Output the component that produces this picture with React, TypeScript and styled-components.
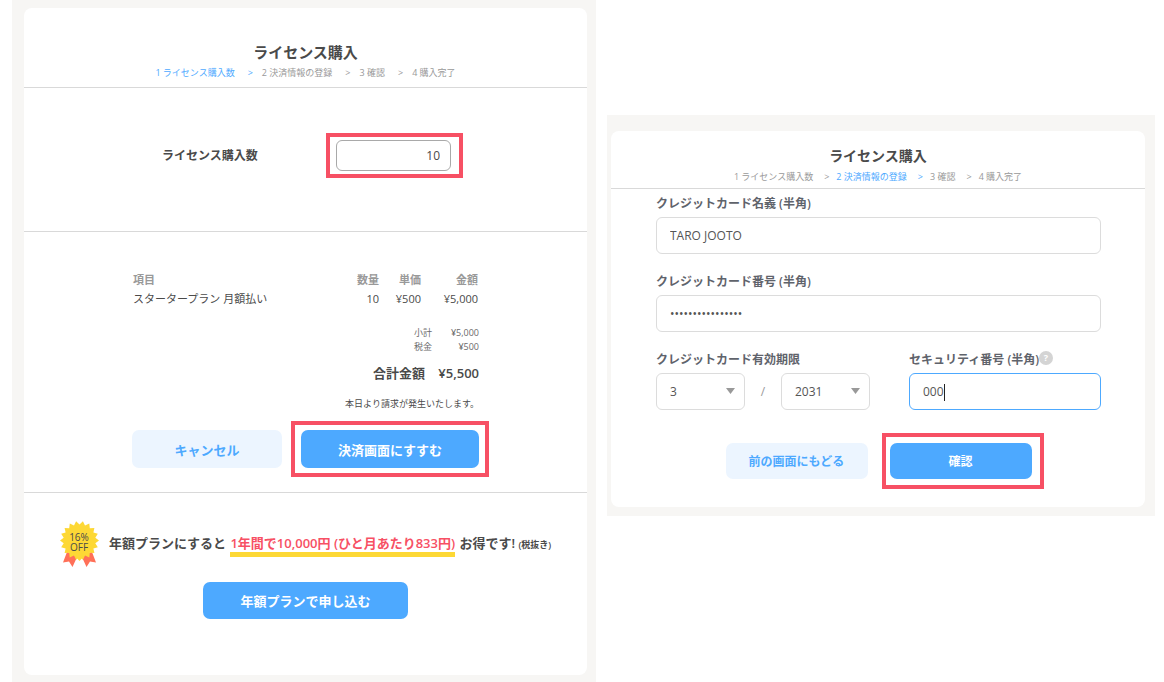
import React from "react";
import styled, { createGlobalStyle, css } from "styled-components";

const color = {
  primary: "#4da9ff",
  primarySoft: "#ecf5ff",
  highlight: "#f75064",
  line: "#d9d9d9",
  text: "#4a4a4a",
  label: "#5f636b",
  muted: "#999999",
  backdrop: "#f7f6f4",
};

const GlobalStyle = createGlobalStyle`
  *, *::before, *::after { box-sizing: border-box; }
  body {
    margin: 0;
    background: #fff;
    color: ${color.text};
    font-family: "Open Sans", "Noto Sans CJK JP", sans-serif;
    font-size: 12px;
  }
  button, input, select { font: inherit; color: inherit; margin: 0; }
  h1, p, dl, dd, ol { margin: 0; padding: 0; }
`;

const Page = styled.main`
  display: grid;
  grid-template-columns: minmax(0, 584fr) minmax(0, 548fr);
  align-items: start;
  gap: 11px;
  padding: 0 9px 0 12px;
`;

const CountPanel = styled.div`
  padding: 8px 9px 7px 12px;
  background: ${color.backdrop};
`;

const PaymentPanel = styled.div`
  margin-top: 115px;
  padding: 16px 10px 9px 4px;
  background: ${color.backdrop};
`;

const Card = styled.section`
  background: #fff;
  border-radius: 8px;
`;

const CardHeader = styled.header<{ $compact?: boolean }>`
  padding: ${(p) => (p.$compact ? "15px 0 3px" : "34px 0 6px")};
  border-bottom: 1px solid ${color.line};
  text-align: center;
`;

const Title = styled.h1<{ $compact?: boolean }>`
  font-size: ${(p) => (p.$compact ? 14 : 15)}px;
  line-height: 20px;
  font-weight: 700;
`;

const StepList = styled.ol`
  display: flex;
  justify-content: center;
  margin-top: 3px;
  list-style: none;
  font-size: 9px;
  line-height: 16px;
`;

const StepItem = styled.li<{ $active: boolean; $compact?: boolean }>`
  color: ${(p) => (p.$active ? color.primary : color.muted)};
  white-space: nowrap;

  &:not(:last-child)::after {
    content: ">";
    margin: ${(p) => (p.$compact ? "0 7px 0 11px" : "0 9px 0 13px")};
  }
`;

const Highlight = styled.span<{ $inset: string }>`
  position: relative;
  display: inline-flex;

  &::after {
    content: "";
    position: absolute;
    inset: ${(p) => p.$inset};
    border: 4px solid ${color.highlight};
    pointer-events: none;
  }
`;

const Button = styled.button<{ $primary?: boolean; $width: number; $height: number; $size?: number }>`
  width: ${(p) => p.$width}px;
  height: ${(p) => p.$height}px;
  padding: 0;
  border: 0;
  border-radius: 7px;
  font-size: ${(p) => p.$size ?? 13}px;
  font-weight: 700;
  cursor: pointer;
  background: ${(p) => (p.$primary ? color.primary : color.primarySoft)};
  color: ${(p) => (p.$primary ? "#fff" : color.primary)};
`;

const CountSection = styled.div`
  padding: 52px 0 60px;
  border-bottom: 1px solid ${color.line};
`;

const CountRow = styled.div`
  display: flex;
  align-items: center;
  justify-content: space-between;
  width: 347px;
  margin: 0 auto;
  padding: 0 28px 0 30px;
`;

const CountLabel = styled.label`
  line-height: 18px;
  font-weight: 700;
`;

const CountInput = styled.input`
  width: 115px;
  height: 31px;
  padding: 0 10px;
  border: 1px solid #a9a9a9;
  border-radius: 6px;
  background: #fff;
  text-align: right;
`;

const OrderSection = styled.div`
  padding: 38px 0 24px;
  border-bottom: 1px solid ${color.line};
`;

const Order = styled.div`
  width: 347px;
  margin: 0 auto;
`;

const OrderTable = styled.table`
  width: 100%;
  border-collapse: collapse;
  font-size: 11px;
  line-height: 19px;

  th, td { padding: 0 1px; text-align: right; }
  th { color: ${color.muted}; font-weight: 700; }
  th:first-child, td:first-child { text-align: left; }
  th:nth-child(2) { width: 50px; }
  th:nth-child(3) { width: 42px; }
  th:nth-child(4) { width: 57px; }
`;

const Totals = styled.dl`
  margin-top: 18px;
`;

const TotalRow = styled.div<{ $grand?: boolean }>`
  display: flex;
  justify-content: flex-end;
  font-size: 9px;
  line-height: 14px;
  color: #6b6b6b;

  dd { width: 47px; text-align: right; }

  ${(p) =>
    p.$grand &&
    css`
      margin-top: 9px;
      font-size: 13px;
      line-height: 20px;
      color: ${color.text};
      dt { font-weight: 700; }
      dd { width: 54px; font-weight: 600; }
    `}
`;

const Note = styled.p`
  margin-top: 14px;
  text-align: right;
  font-size: 9px;
  line-height: 14px;
`;

const OrderActions = styled.div`
  display: flex;
  justify-content: space-between;
  margin-top: 19px;
`;

const PromoSection = styled.div`
  display: flex;
  flex-direction: column;
  align-items: center;
  gap: 15px;
  padding: 28px 0 56px;
`;

const PromoRow = styled.div`
  display: flex;
  align-items: center;
  gap: 10px;
`;

const PromoText = styled.p`
  font-size: 13px;
  line-height: 20px;
  font-weight: 600;
  white-space: nowrap;

  em {
    display: inline-block;
    margin: 0 1px -5px;
    border-bottom: 5px solid #fdd835;
    color: ${color.highlight};
    font-style: normal;
    line-height: 18px;
  }
  small { font-size: 9px; }
`;

const Form = styled.form`
  display: flex;
  flex-direction: column;
  gap: 19px;
  padding: 6px 44px 28px 45px;
  color: ${color.label};
`;

const Field = styled.div`
  position: relative;
  display: flex;
  flex-direction: column;
  gap: 4px;
  min-width: 0;
`;

const labelStyle = css`
  font-size: 12px;
  line-height: 18px;
  font-weight: 600;
  white-space: nowrap;
`;

const FieldLabel = styled.label`
  ${labelStyle}
`;

const FieldCaption = styled.span`
  ${labelStyle}
`;

const control = css`
  width: 100%;
  height: 37px;
  padding: 0 13px;
  border: 1px solid #dcdcdc;
  border-radius: 6px;
  background: #fff;
  color: #555;
  outline: none;
`;

const TextInput = styled.input<{ $active?: boolean }>`
  ${control}
  ${(p) => p.$active && `border-color: ${color.primary};`}
`;

const SelectInput = styled.select`
  ${control}
  appearance: none;
`;

const SelectBox = styled.span`
  position: relative;
  flex: 1;

  svg {
    position: absolute;
    top: 15px;
    right: 10px;
    pointer-events: none;
  }
`;

const SplitRow = styled.div`
  display: grid;
  grid-template-columns: minmax(0, 214fr) minmax(0, 192fr);
  gap: 39px;
`;

const Expiry = styled.div`
  display: flex;
  align-items: center;
`;

const Slash = styled.span`
  width: 36px;
  text-align: center;
  color: ${color.muted};
`;

const InputBox = styled.div`
  position: relative;
  display: flex;
`;

const Caret = styled.span`
  position: absolute;
  top: 11px;
  left: 35px;
  width: 1px;
  height: 17px;
  background: #222;
`;

const Help = styled.button`
  position: absolute;
  top: 0;
  left: 130px;
  width: 14px;
  height: 14px;
  padding: 0;
  border: 0;
  border-radius: 50%;
  background: #d4d4d4;
  color: #fff;
  font-size: 9px;
  line-height: 14px;
  font-weight: 700;
`;

const FormActions = styled.div`
  display: flex;
  justify-content: center;
  gap: 22px;
  margin-top: 14px;
`;

const STEPS = ["1 ライセンス購入数", "2 決済情報の登録", "3 確認", "4 購入完了"];

function Header({ current, compact }: { current: number; compact?: boolean }) {
  return (
    <CardHeader $compact={compact}>
      <Title $compact={compact}>ライセンス購入</Title>
      <StepList>
        {STEPS.map((step, i) => (
          <StepItem key={step} $active={i === current} $compact={compact}>
            {step}
          </StepItem>
        ))}
      </StepList>
    </CardHeader>
  );
}

const BURST = Array.from({ length: 36 }, (_, i) => {
  const radius = i % 2 === 0 ? 19.5 : 16;
  const angle = ((i + 1) * Math.PI) / 18;
  return `${(19.5 + radius * Math.sin(angle)).toFixed(1)},${(19.5 - radius * Math.cos(angle)).toFixed(1)}`;
}).join(" ");

function DiscountBadge() {
  return (
    <svg width="39" height="46" viewBox="0 0 39 46" role="img" aria-label="16% OFF">
      <path d="M7 31 L3 41.5 L9 40.5 L12.5 46 L18 34 Z" fill="#ff7058" />
      <path d="M32 31 L36 41.5 L30 40.5 L26.5 46 L21 34 Z" fill="#ff7058" />
      <polygon points={BURST} fill="#fdd835" />
      <path d="M14 34 L19.5 40 L25 34 Z" fill="#fdd835" />
      <g fill="#4a4a4a" fontSize="10" textAnchor="middle">
        <text x="19" y="20">16%</text>
        <text x="19" y="30">OFF</text>
      </g>
    </svg>
  );
}

function Dropdown({ label, value }: { label: string; value: string }) {
  return (
    <SelectBox>
      <SelectInput aria-label={label} defaultValue={value}>
        <option>{value}</option>
      </SelectInput>
      <svg width="9" height="6" viewBox="0 0 9 6" aria-hidden="true">
        <path d="M0 0H9L4.5 6Z" fill="#999" />
      </svg>
    </SelectBox>
  );
}

function LicenseCountCard() {
  return (
    <Card>
      <Header current={0} />
      <CountSection>
        <CountRow>
          <CountLabel htmlFor="count">ライセンス購入数</CountLabel>
          <Highlight $inset="-7px -12px -7px -10px">
            <CountInput id="count" defaultValue="10" inputMode="numeric" />
          </Highlight>
        </CountRow>
      </CountSection>
      <OrderSection>
        <Order>
          <OrderTable>
            <thead>
              <tr>
                <th>項目</th>
                <th>数量</th>
                <th>単価</th>
                <th>金額</th>
              </tr>
            </thead>
            <tbody>
              <tr>
                <td>スタータープラン 月額払い</td>
                <td>10</td>
                <td>¥500</td>
                <td>¥5,000</td>
              </tr>
            </tbody>
          </OrderTable>
          <Totals>
            <TotalRow>
              <dt>小計</dt>
              <dd>¥5,000</dd>
            </TotalRow>
            <TotalRow>
              <dt>税金</dt>
              <dd>¥500</dd>
            </TotalRow>
            <TotalRow $grand>
              <dt>合計金額</dt>
              <dd>¥5,500</dd>
            </TotalRow>
          </Totals>
          <Note>本日より請求が発生いたします。</Note>
          <OrderActions>
            <Button type="button" $width={150} $height={38}>
              キャンセル
            </Button>
            <Highlight $inset="-9px -10px">
              <Button type="button" $primary $width={178} $height={38}>
                決済画面にすすむ
              </Button>
            </Highlight>
          </OrderActions>
        </Order>
      </OrderSection>
      <PromoSection>
        <PromoRow>
          <DiscountBadge />
          <PromoText>
            年額プランにすると <em>1年間で10,000円 (ひと月あたり833円)</em> お得です! <small>(税抜き)</small>
          </PromoText>
        </PromoRow>
        <Button type="button" $primary $width={205} $height={37}>
          年額プランで申し込む
        </Button>
      </PromoSection>
    </Card>
  );
}

function PaymentCard() {
  return (
    <Card>
      <Header current={1} compact />
      <Form onSubmit={(e) => e.preventDefault()}>
        <Field>
          <FieldLabel htmlFor="holder">クレジットカード名義 (半角)</FieldLabel>
          <TextInput id="holder" defaultValue="TARO JOOTO" />
        </Field>
        <Field>
          <FieldLabel htmlFor="number">クレジットカード番号 (半角)</FieldLabel>
          <TextInput id="number" type="password" defaultValue="0000000000000000" />
        </Field>
        <SplitRow>
          <Field role="group" aria-labelledby="expiry">
            <FieldCaption id="expiry">クレジットカード有効期限</FieldCaption>
            <Expiry>
              <Dropdown label="月" value="3" />
              <Slash>/</Slash>
              <Dropdown label="年" value="2031" />
            </Expiry>
          </Field>
          <Field>
            <FieldLabel htmlFor="code">セキュリティ番号 (半角)</FieldLabel>
            <Help type="button" aria-label="セキュリティ番号について">
              ?
            </Help>
            <InputBox>
              <TextInput id="code" $active defaultValue="000" />
              <Caret />
            </InputBox>
          </Field>
        </SplitRow>
        <FormActions>
          <Button type="button" $width={142} $height={36} $size={12}>
            前の画面にもどる
          </Button>
          <Highlight $inset="-10px -12px -10px -8px">
            <Button type="submit" $primary $width={142} $height={36} $size={12}>
              確認
            </Button>
          </Highlight>
        </FormActions>
      </Form>
    </Card>
  );
}

export default function App() {
  return (
    <>
      <GlobalStyle />
      <Page>
        <CountPanel>
          <LicenseCountCard />
        </CountPanel>
        <PaymentPanel>
          <PaymentCard />
        </PaymentPanel>
      </Page>
    </>
  );
}
